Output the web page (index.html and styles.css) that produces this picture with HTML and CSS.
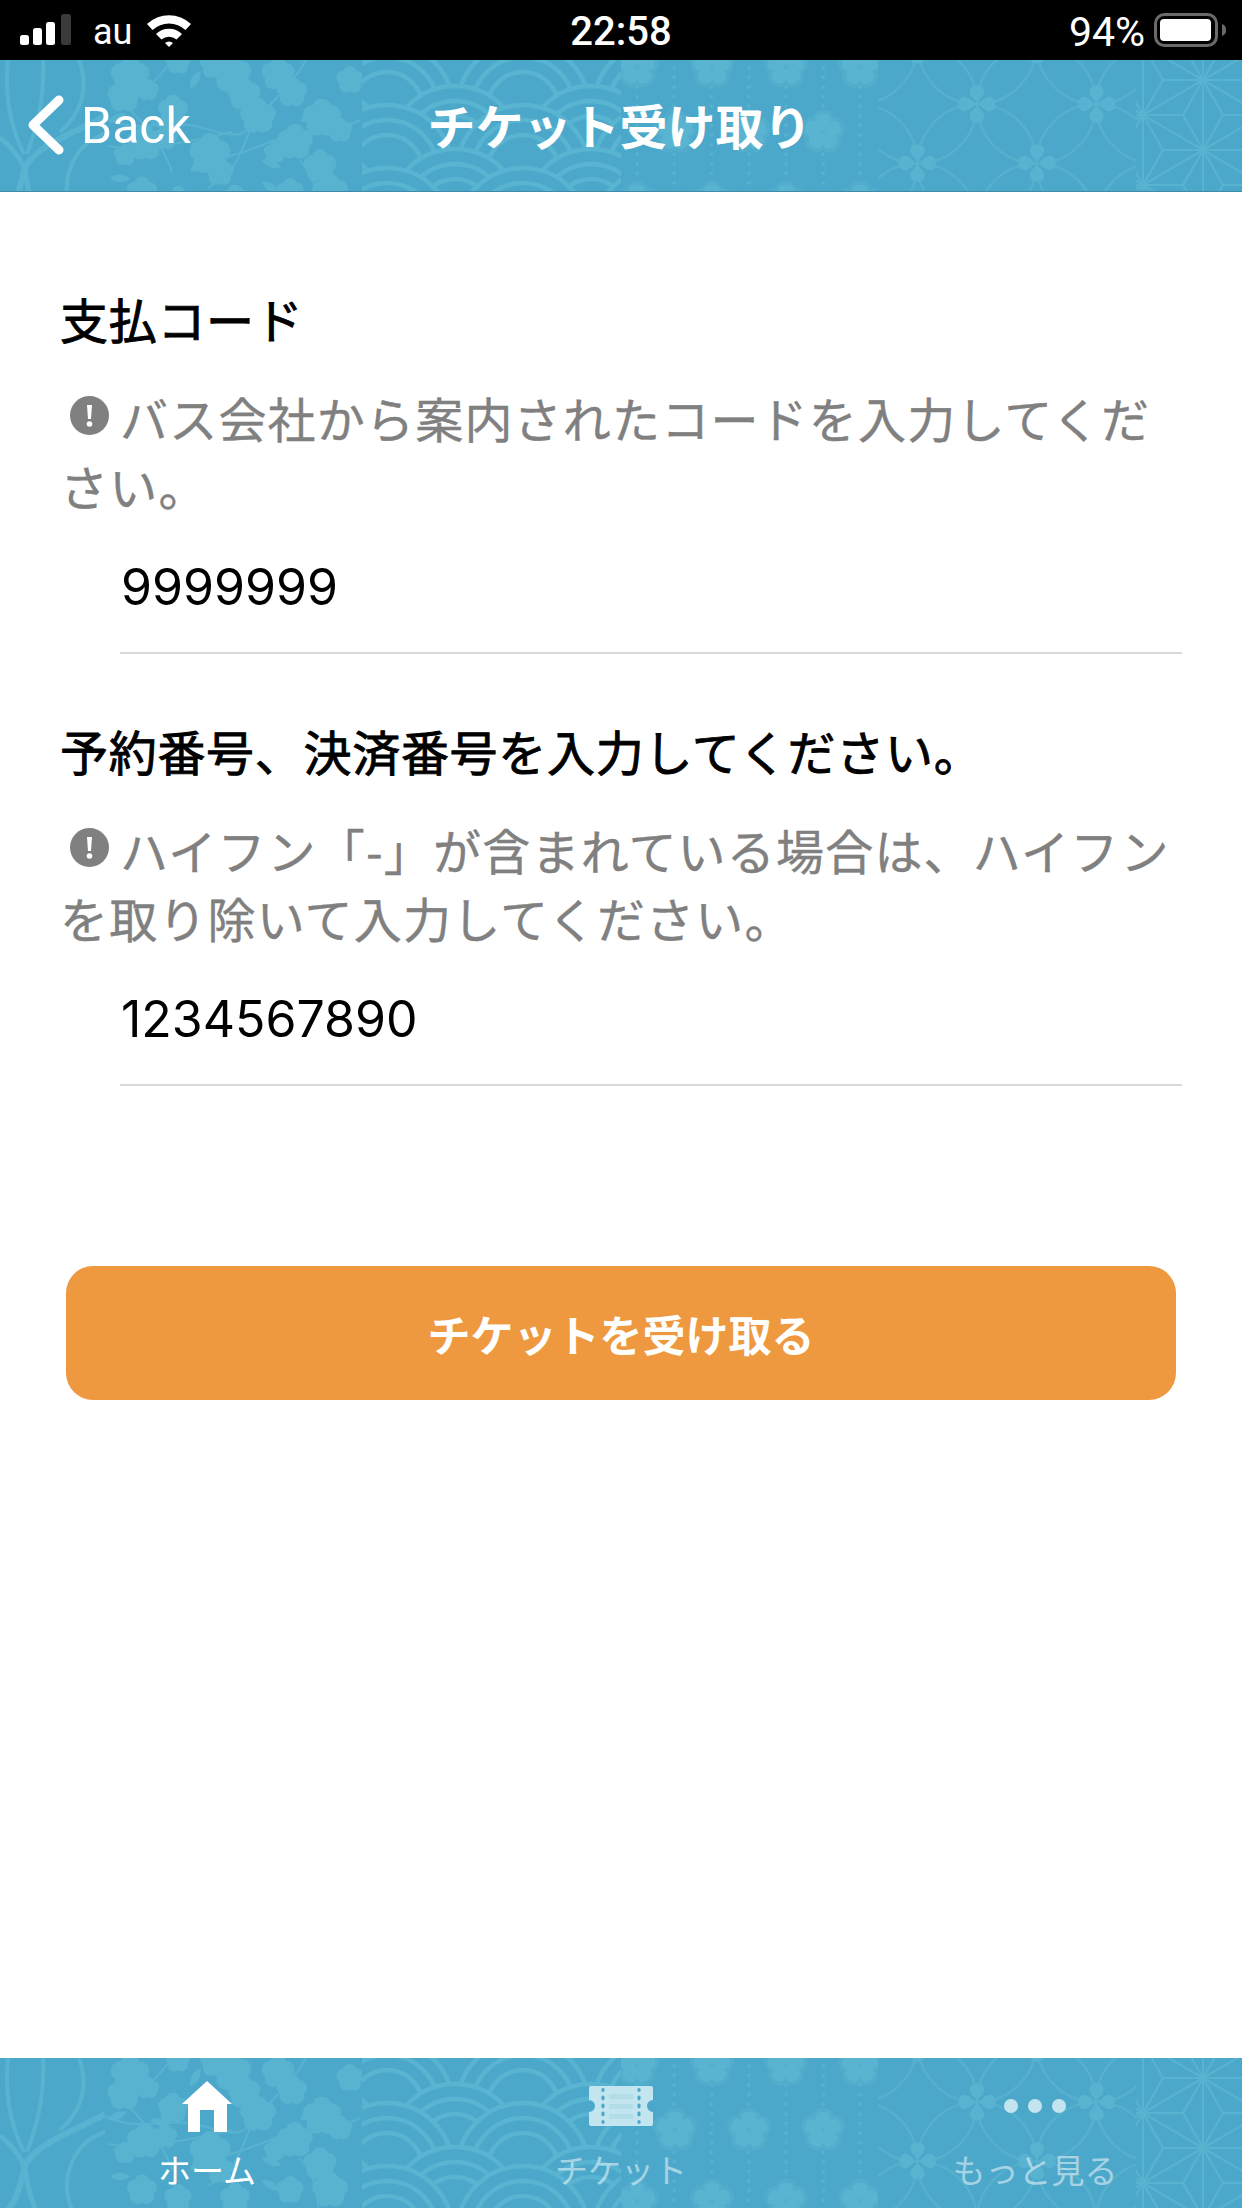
FILE: index.html
```html
<!DOCTYPE html>
<html lang="ja">
<head>
    <meta charset="UTF-8">
    <meta name="viewport" content="width=device-width, initial-scale=1.0">
    <title>チケット受け取り</title>
    <link rel="stylesheet" href="styles.css">
</head>
<body>
    <div class="status-bar">
        <div class="status-left">
            <svg class="signal" width="52" height="32" viewBox="0 0 52 32">
                <rect x="0" y="21" width="9" height="10" rx="2.5" fill="#fff"/>
                <rect x="13" y="14" width="9" height="17" rx="2.5" fill="#fff"/>
                <rect x="26" y="8" width="9" height="23" rx="2.5" fill="#fff"/>
                <rect x="41" y="0" width="10" height="31" rx="2.5" fill="#3a3a3a"/>
            </svg>
            <span class="carrier">au</span>
            <svg class="wifi" width="46" height="34" viewBox="0 0 46 34">
                <path d="M1 11 A32 32 0 0 1 45 11 L39.500 17 A24 24 0 0 0 6.500 17 Z" fill="#fff"/>
                <path d="M10 21 A19 19 0 0 1 36 21 L30.500 26.500 A11.500 11.500 0 0 0 15.500 26.500 Z" fill="#fff"/>
                <path d="M19 30 A6 6 0 0 1 27 30 L23 34 Z" fill="#fff"/>
            </svg>
        </div>
        <div class="status-time">22:58</div>
        <div class="status-right">
            <span class="battery-text">94%</span>
            <svg class="battery" width="72" height="34" viewBox="0 0 72 34">
                <rect x="1.500" y="1.500" width="61" height="31" rx="9" fill="none" stroke="#6a6a6a" stroke-width="3"/>
                <rect x="6" y="6" width="51" height="22" rx="4" fill="#fff"/>
                <path d="M68 11 C71 12 72 14 72 17 C72 20 71 22 68 23 Z" fill="#6a6a6a"/>
            </svg>
        </div>
    </div>

    <header class="nav-bar">
        <svg class="wagara" width="1242" height="131" viewBox="0 0 1242 131">
            <defs>
                <!-- ume blossom silhouette -->
                <g id="ume">
                    <circle cx="0" cy="-7" r="7"/>
                    <circle cx="6.700" cy="-2.200" r="7"/>
                    <circle cx="4.100" cy="5.700" r="7"/>
                    <circle cx="-4.100" cy="5.700" r="7"/>
                    <circle cx="-6.700" cy="-2.200" r="7"/>
                </g>
                <path id="ume-leaf" d="M0 0 C5 -6 14 -7 20 -3 C14 3 6 4 0 0 Z"/>
                <!-- one wave scale, three rings -->
                <g id="scale" fill="#4ca8ca" stroke="#59b4d1" stroke-width="4.500">
                    <circle r="66"/>
                    <circle r="51" fill="none"/>
                    <circle r="36" fill="none"/>
                </g>
                <g id="waves-a">
                    <use href="#scale" x="319"/>
                    <use href="#scale" x="455"/>
                    <use href="#scale" x="591"/>
                </g>
                <g id="waves-b">
                    <use href="#scale" x="387"/>
                    <use href="#scale" x="523"/>
                    <use href="#scale" x="659"/>
                </g>
                <!-- five petal crest -->
                <g id="crest">
                    <circle cx="0" cy="-11" r="11.500" fill="#52adcc"/>
                    <circle cx="10.500" cy="-3.400" r="11.500" fill="#52adcc"/>
                    <circle cx="6.500" cy="8.900" r="11.500" fill="#52adcc"/>
                    <circle cx="-6.500" cy="8.900" r="11.500" fill="#52adcc"/>
                    <circle cx="-10.500" cy="-3.400" r="11.500" fill="#52adcc"/>
                    <g id="petals" fill="#59b4d1">
                        <path id="petal" d="M0 -1 C-7 -7 -9 -12 -6.500 -16 C-4.500 -19 4.500 -19 6.500 -16 C9 -12 7 -7 0 -1 Z"/>
                        <use href="#petal" transform="rotate(72)"/>
                        <use href="#petal" transform="rotate(144)"/>
                        <use href="#petal" transform="rotate(216)"/>
                        <use href="#petal" transform="rotate(288)"/>
                    </g>
                </g>
                <!-- four petal clover for the linked circles -->
                <g id="clover" fill="#58b3d0">
                    <path id="leaf" d="M0 -2 C-6 -7 -8 -11 -7 -14 C-6 -20 6 -20 7 -14 C8 -11 6 -7 0 -2 Z"/>
                    <use href="#leaf" transform="rotate(90)"/>
                    <use href="#leaf" transform="rotate(180)"/>
                    <use href="#leaf" transform="rotate(270)"/>
                </g>
                <pattern id="dot-rows" x="618.400" y="3" width="37.250" height="9.600" patternUnits="userSpaceOnUse">
                    <circle cx="18.600" cy="4.800" r="1.700" fill="#58b3d0"/>
                </pattern>
                <pattern id="shippo" x="917.500" y="-15.500" width="119" height="119" patternUnits="userSpaceOnUse">
                    <g fill="none" stroke="#5ab3cf" stroke-width="1.700">
                        <circle cx="0" cy="59.500" r="59.500"/>
                        <circle cx="119" cy="59.500" r="59.500"/>
                        <circle cx="59.500" cy="0" r="59.500"/>
                        <circle cx="59.500" cy="119" r="59.500"/>
                    </g>
                </pattern>
                <pattern id="asanoha" x="1143" y="-15" width="120" height="70" patternUnits="userSpaceOnUse">
                    <path fill="none" stroke="#58b3d0" stroke-width="2" d="M0 0V70M60 0V70M120 0V70M0 0L120 70M0 70L120 0M20 35L0 0M20 35L0 70M20 35L60 35M100 35L60 35M100 35L120 0M100 35L120 70M40 0L0 0M40 0L60 35M40 0L60 -35M80 0L120 0M80 0L60 35M80 0L60 -35M40 70L0 70M40 70L60 35M40 70L60 105M80 70L120 70M80 70L60 35M80 70L60 105"/>
                    <circle cx="0" cy="0" r="4.500" fill="#58b3d0"/>
                    <circle cx="120" cy="0" r="4.500" fill="#58b3d0"/>
                    <circle cx="0" cy="70" r="4.500" fill="#58b3d0"/>
                    <circle cx="120" cy="70" r="4.500" fill="#58b3d0"/>
                    <circle cx="60" cy="35" r="4.500" fill="#58b3d0"/>
                </pattern>

                <g id="wagara-band">
                    <rect width="1242" height="150" fill="#4ca8ca"/>

                    <!-- lantern strokes -->
                    <svg x="0" y="0" width="105" height="150" viewBox="0 0 105 150">
                        <g fill="none" stroke="#58b3d0">
                            <path stroke-width="4" d="M8 0 C4 40 12 70 24 94"/>
                            <path stroke-width="4" d="M43 0 C45 40 36 70 27 94"/>
                            <path stroke-width="4" d="M79 0 C90 30 80 55 60 72"/>
                            <path stroke-width="6" d="M105 56 C80 70 40 84 27 104 C20 118 22 134 8 152"/>
                            <path stroke-width="5" d="M0 78 C15 90 24 104 26 116 C28 130 30 140 36 152"/>
                            <path stroke-width="4" d="M105 74 C75 84 58 118 72 152"/>
                        </g>
                    </svg>

                    <!-- branch of blossoms -->
                    <svg x="105" y="0" width="258" height="150" viewBox="105 0 258 150">
                        <g fill="none" stroke="#58b3d0" stroke-width="2">
                            <path d="M105 58 C135 74 160 60 195 66 C215 70 235 82 250 68"/>
                            <path d="M172 0 C162 15 150 28 128 40"/>
                            <path d="M306 0 C290 30 262 48 250 70 C240 95 236 112 208 128"/>
                            <path d="M108 86 C140 92 190 82 232 72"/>
                            <path d="M130 50 C150 70 165 90 172 112"/>
                            <path d="M360 60 C330 75 300 72 275 80 C250 90 225 100 205 100"/>
                            <path d="M300 100 C315 120 320 135 318 150"/>
                        </g>
                        <g fill="#58b3d0">
                            <use href="#ume" transform="translate(130 16) scale(1.400)"/>
                            <use href="#ume" transform="translate(124 36) scale(1.200)"/>
                            <use href="#ume" transform="translate(148 30) scale(.8)"/>
                            <use href="#ume" transform="translate(178 2) scale(.9)"/>
                            <use href="#ume" transform="translate(215 4) scale(1.100)"/>
                            <use href="#ume" transform="translate(232 14) scale(1.400)"/>
                            <use href="#ume" transform="translate(244 34) scale(1.200)"/>
                            <use href="#ume" transform="translate(173 50) scale(1.100)"/>
                            <use href="#ume" transform="translate(258 56) scale(1.300)"/>
                            <use href="#ume" transform="translate(278 14) scale(1.200)"/>
                            <use href="#ume" transform="translate(292 32) scale(1.100)"/>
                            <use href="#ume" transform="translate(350 20) scale(1)"/>
                            <use href="#ume" transform="translate(322 58) scale(1.400)"/>
                            <use href="#ume" transform="translate(340 70) scale(.9)"/>
                            <use href="#ume" transform="translate(145 83) scale(1.300)"/>
                            <use href="#ume" transform="translate(165 78) scale(.9)"/>
                            <use href="#ume" transform="translate(125 95) scale(.8)"/>
                            <use href="#ume" transform="translate(210 94) scale(1.500)"/>
                            <use href="#ume" transform="translate(220 112) scale(1)"/>
                            <use href="#ume" transform="translate(295 82) scale(1.300)"/>
                            <use href="#ume" transform="translate(320 106) scale(1.200)"/>
                            <use href="#ume" transform="translate(275 92) scale(.8)"/>
                            <use href="#ume" transform="translate(142 132) scale(1.100)"/>
                            <use href="#ume" transform="translate(178 140) scale(1)"/>
                            <use href="#ume" transform="translate(290 132) scale(1)"/>
                            <use href="#ume" transform="translate(330 132) scale(1.300)"/>
                            <use href="#ume" transform="translate(235 140) scale(1.100)"/>
                            <use href="#ume-leaf" transform="translate(108 62) rotate(-15)"/>
                            <use href="#ume-leaf" transform="translate(150 62) rotate(20)"/>
                            <use href="#ume-leaf" transform="translate(190 28) rotate(-50)"/>
                            <use href="#ume-leaf" transform="translate(262 100) rotate(30)"/>
                            <use href="#ume-leaf" transform="translate(300 62) rotate(-25)"/>
                            <use href="#ume-leaf" transform="translate(110 118) rotate(10)"/>
                            <use href="#ume-leaf" transform="translate(190 112) rotate(-30)"/>
                            <use href="#ume-leaf" transform="translate(262 122) rotate(40)"/>
                        </g>
                    </svg>

                    <!-- wave scales -->
                    <svg x="362" y="0" width="259" height="150" viewBox="362 0 259 150">
                        <use href="#waves-a" y="29"/>
                        <use href="#waves-b" y="48"/>
                        <use href="#waves-a" y="92"/>
                        <use href="#waves-b" y="111"/>
                        <use href="#waves-a" y="155"/>
                        <use href="#waves-b" y="174"/>
                    </svg>

                    <!-- crests and dotted lines -->
                    <svg x="621" y="0" width="257" height="150" viewBox="621 0 257 150">
                        <rect x="621" width="257" height="150" fill="url(#dot-rows)"/>
                        <use href="#crest" x="637" y="7"/>
                        <use href="#crest" x="712" y="7"/>
                        <use href="#crest" x="786" y="7"/>
                        <use href="#crest" x="860" y="7"/>
                        <use href="#crest" x="675" y="72"/>
                        <use href="#crest" x="749" y="72"/>
                        <use href="#crest" x="823" y="72"/>
                        <use href="#crest" x="637" y="143"/>
                        <use href="#crest" x="712" y="143"/>
                        <use href="#crest" x="786" y="143"/>
                        <use href="#crest" x="860" y="143"/>
                    </svg>

                    <!-- linked circles -->
                    <svg x="878" y="0" width="258" height="150" viewBox="878 0 258 150">
                        <rect x="878" width="258" height="150" fill="url(#shippo)"/>
                        <use href="#clover" x="917.500" y="-15"/>
                        <use href="#clover" x="1037" y="-15"/>
                        <use href="#clover" x="977" y="44"/>
                        <use href="#clover" x="1096.500" y="44"/>
                        <use href="#clover" x="917.500" y="103"/>
                        <use href="#clover" x="1037" y="103"/>
                    </svg>

                    <!-- hemp leaf -->
                    <rect x="1136" width="106" height="150" fill="url(#asanoha)"/>
                </g>
            </defs>
            <use href="#wagara-band"/>
        </svg>
        <a class="back-link">
            <svg class="back-chevron" width="38" height="60" viewBox="0 0 38 60">
                <path d="M32 5 L6 30 L32 55" fill="none" stroke="#fff" stroke-width="9" stroke-linecap="round" stroke-linejoin="round"/>
            </svg>
            <span class="back-text">Back</span>
        </a>
        <h1 class="nav-title">チケット受け取り</h1>
    </header>

    <main class="content">
        <section class="field">
            <h2 class="field-label">支払コード</h2>
            <p class="field-hint">
                <svg class="hint-icon" width="39" height="39" viewBox="0 0 39 39">
                    <circle cx="19.500" cy="19.500" r="19.500" fill="#808080"/>
                    <path d="M17 9 H22 L21 23 H18 Z" fill="#fff"/>
                    <circle cx="19.500" cy="28" r="2.800" fill="#fff"/>
                </svg>バス会社から案内されたコードを入力してください。
            </p>
            <div class="field-value">9999999</div>
        </section>
        <section class="field">
            <h2 class="field-label">予約番号、決済番号を入力してください。</h2>
            <p class="field-hint">
                <svg class="hint-icon" width="39" height="39" viewBox="0 0 39 39">
                    <circle cx="19.500" cy="19.500" r="19.500" fill="#808080"/>
                    <path d="M17 9 H22 L21 23 H18 Z" fill="#fff"/>
                    <circle cx="19.500" cy="28" r="2.800" fill="#fff"/>
                </svg>ハイフン「-」が含まれている場合は、ハイフンを取り除いて入力してください。
            </p>
            <div class="field-value">1234567890</div>
        </section>
        <button class="submit-btn">チケットを受け取る</button>
    </main>

    <nav class="tab-bar">
        <svg class="wagara" width="1242" height="150" viewBox="0 0 1242 150">
            <use href="#wagara-band"/>
        </svg>
        <a class="tab active">
            <span class="tab-icon">
                <svg width="50" height="51" viewBox="0 0 50 51">
                    <path d="M25 0 L50 23 H45 V51 H32 V29 H18 V51 H6 V23 H0 Z" fill="#fff"/>
                </svg>
            </span>
            <span class="tab-label">ホーム</span>
        </a>
        <a class="tab">
            <span class="tab-icon dim">
                <svg width="64" height="40" viewBox="0 0 64 40">
                    <path d="M2 0 H62 A2 2 0 0 1 64 2 V14 A6 6 0 0 0 64 26 V38 A2 2 0 0 1 62 40 H2 A2 2 0 0 1 0 38 V26 A6 6 0 0 0 0 14 V2 A2 2 0 0 1 2 0 Z" fill="#c3e5ef"/>
                    <path d="M20 8 H44 V13 H20 Z M20 18 H44 V23 H20 Z M20 28 H44 V33 H20 Z" fill="#b3dde9"/>
                    <g fill="#4ca8ca">
                        <ellipse cx="14" cy="4" rx="1.700" ry="2"/>
                        <ellipse cx="14" cy="12" rx="1.700" ry="2.400"/>
                        <ellipse cx="14" cy="20" rx="1.700" ry="2.400"/>
                        <ellipse cx="14" cy="28" rx="1.700" ry="2.400"/>
                        <ellipse cx="14" cy="36" rx="1.700" ry="2"/>
                        <ellipse cx="50" cy="4" rx="1.700" ry="2"/>
                        <ellipse cx="50" cy="12" rx="1.700" ry="2.400"/>
                        <ellipse cx="50" cy="20" rx="1.700" ry="2.400"/>
                        <ellipse cx="50" cy="28" rx="1.700" ry="2.400"/>
                        <ellipse cx="50" cy="36" rx="1.700" ry="2"/>
                    </g>
                </svg>
            </span>
            <span class="tab-label">チケット</span>
        </a>
        <a class="tab">
            <span class="tab-icon dim">
                <span class="more-dots"><i></i><i></i><i></i></span>
            </span>
            <span class="tab-label">もっと見る</span>
        </a>
    </nav>
</body>
</html>
```

FILE: styles.css
```css
* {
    box-sizing: border-box;
}
html, body {
    margin: 0;
    padding: 0;
}
body {
    width: 1242px;
    height: 2208px;
    display: flex;
    flex-direction: column;
    overflow: hidden;
    background-color: #fff;
    font-family: "Noto Sans CJK JP", sans-serif;
    color: #000;
}

/* status bar */
.status-bar {
    height: 60px;
    flex: none;
    display: grid;
    grid-template-columns: 1fr auto 1fr;
    align-items: center;
    background-color: #000;
    color: #fff;
    font-family: Roboto, sans-serif;
    font-size: 38px;
}
.status-left {
    display: flex;
    align-items: center;
    padding-left: 20px;
}
.carrier {
    margin-left: 21px;
    font-size: 36px;
    padding-top: 3px;
}
.wifi {
    margin-left: 14px;
}
.status-time {
    font-size: 40px;
    font-weight: 500;
    padding-top: 3px;
}
.status-right {
    display: flex;
    justify-content: flex-end;
    align-items: center;
    padding-right: 16px;
}
.battery-text {
    font-size: 41px;
    margin-right: 9px;
    padding-top: 3px;
}

/* navigation bar */
.nav-bar {
    position: relative;
    height: 132px;
    flex: none;
    display: flex;
    align-items: center;
    justify-content: center;
    border-bottom: 1px solid #3f8ca8;
    color: #fff;
    overflow: hidden;
}
.wagara {
    position: absolute;
    top: 0;
    left: 0;
}
.back-link {
    position: absolute;
    top: 34px;
    left: 27px;
    display: flex;
    align-items: center;
    font-family: Roboto, sans-serif;
    font-size: 50px;
}
.back-chevron {
    margin-right: 16px;
}
.back-text {
    padding-top: 3px;
}
.nav-title {
    position: relative;
    margin: 0 3px 4px 0;
    font-size: 48px;
    font-weight: 700;
}

/* form */
.content {
    flex: 1;
    padding: 92px 60px 0 60px;
}
.field {
    height: 432px;
    display: flex;
    flex-direction: column;
}
.field-label {
    margin: 0;
    font-size: 48px;
    font-weight: 400;
    letter-spacing: 0.7px;
    -webkit-text-stroke: 0.9px #000;
    line-height: 68px;
}
.field-hint {
    margin: 31px 0 0;
    font-size: 48px;
    line-height: 68px;
    letter-spacing: 1.2px;
    -webkit-text-stroke: 0.4px #808080;
    color: #808080;
}
.hint-icon {
    margin: 0 11px 0 10px;
    vertical-align: 3px;
}
.field-value {
    margin: 33px 0 0 60px;
    padding-left: 1px;
    height: 102px;
    line-height: 70px;
    border-bottom: 2px solid #d9d9d9;
    font-family: Inter, sans-serif;
    font-size: 50px;
}
.submit-btn {
    display: block;
    width: 1110px;
    height: 134px;
    margin: 118px 0 0 6px;
    border: none;
    border-radius: 27px;
    background-color: #ee9940;
    color: #fff;
    font-family: inherit;
    font-size: 43px;
    font-weight: 700;
}

/* tab bar */
.tab-bar {
    position: relative;
    height: 150px;
    flex: none;
    display: grid;
    grid-template-columns: repeat(3, 1fr);
    overflow: hidden;
}
.tab {
    position: relative;
    display: flex;
    flex-direction: column;
    align-items: center;
    padding-top: 22px;
    color: rgba(255, 255, 255, 0.5);
}
.tab.active {
    color: #fff;
}
.tab-icon {
    height: 52px;
    display: flex;
    align-items: center;
    justify-content: center;
}
.tab-label {
    margin-top: 17px;
    font-size: 33px;
    line-height: 40px;
}
.more-dots {
    display: flex;
    gap: 10px;
}
.more-dots i {
    width: 14px;
    height: 14px;
    border-radius: 50%;
    background-color: #c3e5ef;
}
```
